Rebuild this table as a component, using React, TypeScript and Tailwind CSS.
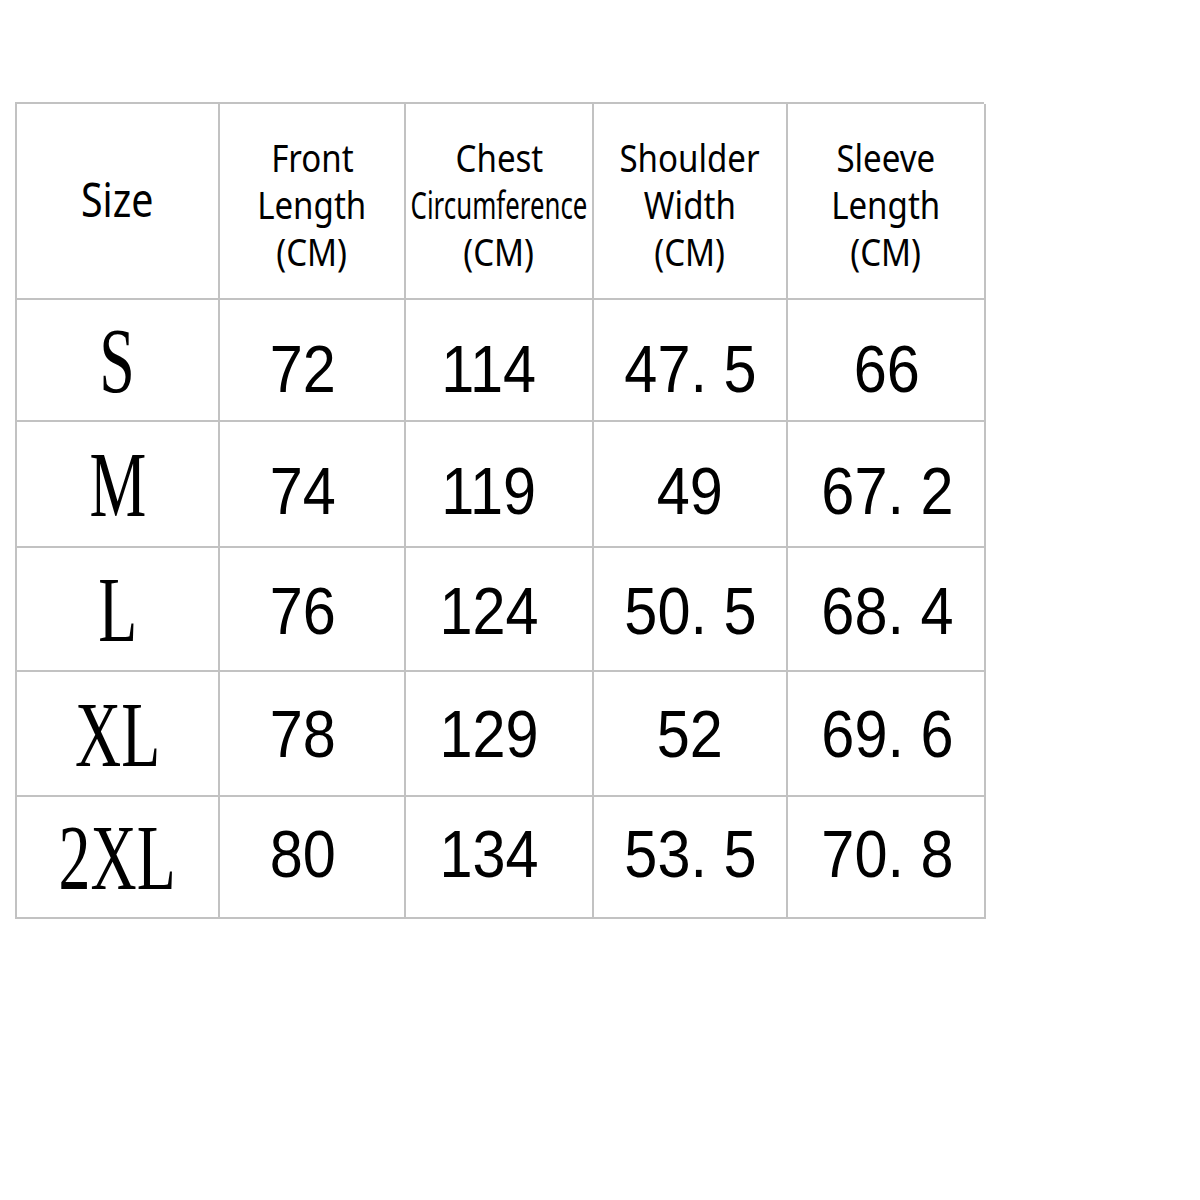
const headers = [
  { lines: ['Size'], size: 'text-[48px]', scale: 'scale-x-[0.82]', pad: 'pb-[6px]' },
  { lines: ['Front', 'Length', '(CM)'], size: 'text-[38px]', scale: 'scale-x-[0.87]', pad: 'pt-[6px]' },
  { lines: ['Chest', 'Circumference', '(CM)'], size: 'text-[38px]', scale: 'scale-x-[0.87]', pad: 'pt-[6px]' },
  { lines: ['Shoulder', 'Width', '(CM)'], size: 'text-[38px]', scale: 'scale-x-[0.87]', pad: 'pt-[6px]' },
  { lines: ['Sleeve', 'Length', '(CM)'], size: 'text-[38px]', scale: 'scale-x-[0.87]', pad: 'pt-[6px]' },
]

const rows = [
  { size: 'S', values: ['72', '114', '47. 5', '66'], nudge: 'pt-[18px]' },
  { size: 'M', values: ['74', '119', '49', '67. 2'], nudge: 'pt-[14px]' },
  { size: 'L', values: ['76', '124', '50. 5', '68. 4'], nudge: 'pt-[4px]' },
  { size: 'XL', values: ['78', '129', '52', '69. 6'], nudge: 'pt-0' },
  { size: '2XL', values: ['80', '134', '53. 5', '70. 8'], nudge: 'pb-[6px]' },
]

// first two value columns sit a little left of centre in the original
const colShift = ['pr-[18px]', 'pr-[20px]', 'pr-0', 'pl-[2px]']

const cell = 'flex items-center justify-center border-r-2 border-b-2 border-[#c2c2c2]'

function HeaderCell({ lines, size, scale, pad }: { lines: string[]; size: string; scale: string; pad: string }) {
  return (
    <div className={`${cell} flex-col ${pad} font-['Noto_Sans',sans-serif] text-black leading-[47px] ${size}`}>
      {lines.map((l) => (
        <span
          key={l}
          className={`inline-block whitespace-nowrap ${l === 'Circumference' ? 'scale-x-[0.68]' : scale}`}
        >
          {l}
        </span>
      ))}
    </div>
  )
}

export default function App() {
  return (
    <div className="w-[1200px] h-[1200px] bg-white">
      <div className="pt-[102px] pl-[15px]">
        <div className="grid w-[969px] grid-cols-[203px_186px_188px_194px_198px] grid-rows-[196px_122px_126px_124px_125px_122px] border-l-2 border-t-2 border-[#c2c2c2]">
          {headers.map((h, i) => (
            <HeaderCell key={i} {...h} />
          ))}
          {rows.map((r) => (
            <div key={r.size} className="contents">
              <div className={`${cell} font-['Liberation_Serif',serif] text-[94px] leading-none text-black`}>
                <span className="inline-block scale-x-[0.68]">{r.size}</span>
              </div>
              {r.values.map((v, j) => (
                <div
                  key={j}
                  className={`${cell} ${r.nudge} ${colShift[j]} font-['Liberation_Sans',sans-serif] text-[66px] leading-none text-black`}
                >
                  <span className="inline-block whitespace-pre scale-x-[0.9]">{v}</span>
                </div>
              ))}
            </div>
          ))}
        </div>
      </div>
    </div>
  )
}
